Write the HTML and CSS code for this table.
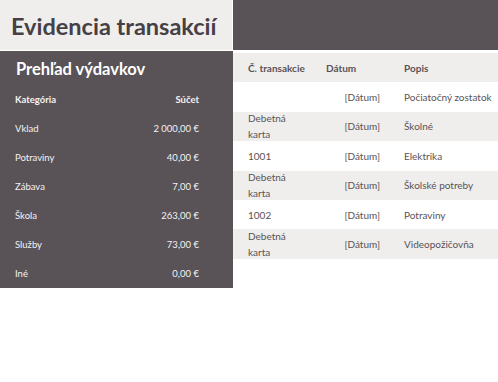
FILE: index.html
```html
<!DOCTYPE html>
<html lang="sk">
<head>
<meta charset="utf-8">
<title>Evidencia transakcií</title>
<link rel="stylesheet" href="styles.css">
</head>
<body>
<div class="page">
  <div class="title-cell"><h1 class="title">Evidencia transakcií</h1></div>
  <div class="band"></div>
  <section class="summary">
    <h2 class="summary-title">Prehľad výdavkov</h2>
    <div class="sum-row sum-head"><span>Kategória</span><span>Súčet</span></div>
    <div class="sum-row"><span>Vklad</span><span>2 000,00 €</span></div>
    <div class="sum-row"><span>Potraviny</span><span>40,00 €</span></div>
    <div class="sum-row"><span>Zábava</span><span>7,00 €</span></div>
    <div class="sum-row"><span>Škola</span><span>263,00 €</span></div>
    <div class="sum-row"><span>Služby</span><span>73,00 €</span></div>
    <div class="sum-row"><span>Iné</span><span>0,00 €</span></div>
  </section>
  <section class="ledger">
    <div class="tr th"><div class="c1">Č. transakcie</div><div class="c2 left">Dátum</div><div class="c3">Popis</div></div>
    <div class="tr"><div class="c1"></div><div class="c2">[Dátum]</div><div class="c3">Počiatočný zostatok</div></div>
    <div class="tr alt"><div class="c1">Debetná karta</div><div class="c2">[Dátum]</div><div class="c3">Školné</div></div>
    <div class="tr"><div class="c1">1001</div><div class="c2">[Dátum]</div><div class="c3">Elektrika</div></div>
    <div class="tr alt"><div class="c1">Debetná karta</div><div class="c2">[Dátum]</div><div class="c3">Školské potreby</div></div>
    <div class="tr"><div class="c1">1002</div><div class="c2">[Dátum]</div><div class="c3">Potraviny</div></div>
    <div class="tr alt"><div class="c1">Debetná karta</div><div class="c2">[Dátum]</div><div class="c3">Videopožičovňa</div></div>
  </section>
</div>
</body>
</html>
```
FILE: styles.css
```css
* { box-sizing: border-box; }
html, body { margin: 0; padding: 0; background: #ffffff; }
body { font-family: Lato, "Open Sans", "Liberation Sans", sans-serif; }

.page {
  display: grid;
  grid-template-columns: 233px 1fr;
  grid-template-rows: 50px auto;
  row-gap: 1px;
  width: 498px;
}

.title-cell {
  background: #efeeec;
  border-right: 1px solid #ffffff;
  display: flex;
  align-items: center;
  padding-left: 11px;
  padding-top: 2px;
}
.title {
  margin: 0;
  font-size: 23.5px;
  font-weight: 700;
  color: #454046;
  white-space: nowrap;
}
.band { background: #595358; }

.summary {
  background: #595358;
  height: 237px;
  color: #f4f2f2;
  padding: 0 34px 0 15px;
}
.summary-title {
  margin: 0;
  height: 34px;
  display: flex;
  align-items: center;
  padding-left: 1px;
  padding-top: 2px;
  font-size: 16.5px;
  font-weight: 700;
  color: #ffffff;
  white-space: nowrap;
}
.sum-row {
  height: 29px;
  display: flex;
  align-items: center;
  justify-content: space-between;
  font-size: 9.5px;
}
.sum-head { font-weight: 700; }

.ledger {
  padding-top: 2px;
  color: #595358;
  font-size: 10px;
}
.tr {
  display: flex;
  align-items: center;
  height: 29.4px;
  line-height: 16px;
}
.tr.alt, .tr.th { background: #efeeec; }
.th { font-weight: 700; }
.c1 { width: 86px; padding: 0 12px 0 15px; }
.th .c1 { white-space: nowrap; }
.c2 { width: 76px; text-align: right; padding-right: 15px; }
.c2.left { text-align: left; padding: 0 0 0 7px; }
.c3 { flex: 1; padding-left: 9px; white-space: nowrap; }
```
